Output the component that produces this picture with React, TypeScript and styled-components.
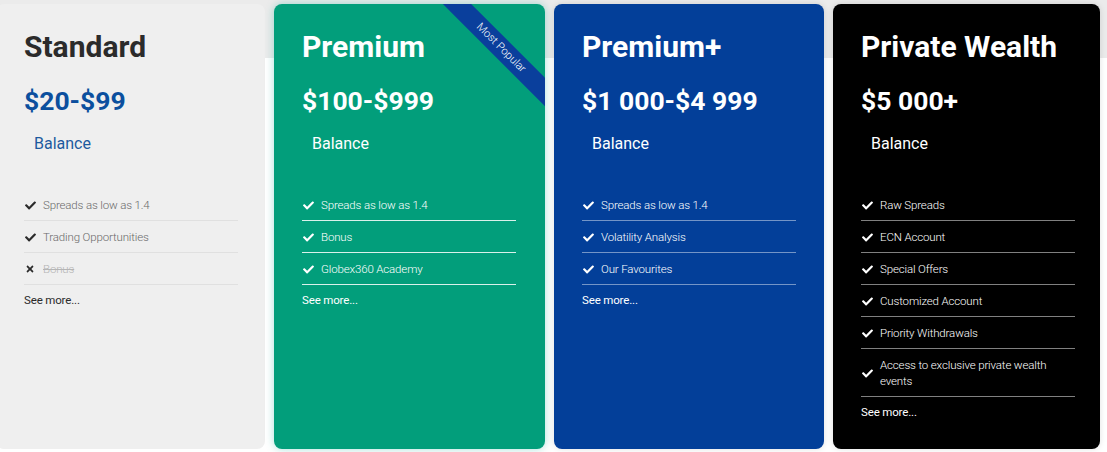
import React from "react";
import styled, { createGlobalStyle } from "styled-components";
import { FaCheck, FaTimes } from "react-icons/fa";

const GlobalStyle = createGlobalStyle`
  html, body { margin: 0; padding: 0; }
  body {
    width: 1107px;
    height: 452px;
    overflow: hidden;
    font-family: Roboto, "Liberation Sans", Arial, sans-serif;
    background: linear-gradient(#ebebeb 0, #ebebeb 58px, #ffffff 58px);
  }
`;

type Variant = "standard" | "premium" | "plus" | "private";

const theme: Record<Variant, { w: number; bg: string; title: string; price: string; balance: string; text: string; icon: string; line: string; more: string; shadow: string }> = {
  standard: { w: 269, bg: "#efefef", title: "#2b2b2b", price: "#0b4f9e", balance: "#1d5a9e", text: "#6a6a6a", icon: "#2b2b2b", line: "#e0e0e0", more: "#2b2b2b", shadow: "none" },
  premium: { w: 271, bg: "#029e7b", title: "#ffffff", price: "#ffffff", balance: "#ffffff", text: "#ffffff", icon: "#ffffff", line: "rgba(255,255,255,0.85)", more: "#ffffff", shadow: "0 0 8px rgba(0,170,150,0.35)" },
  plus: { w: 270, bg: "#033f99", title: "#ffffff", price: "#ffffff", balance: "#ffffff", text: "#ffffff", icon: "#ffffff", line: "rgba(255,255,255,0.45)", more: "#ffffff", shadow: "0 0 6px rgba(0,0,0,0.12)" },
  private: { w: 267, bg: "#000000", title: "#ffffff", price: "#ffffff", balance: "#ffffff", text: "#ffffff", icon: "#ffffff", line: "rgba(255,255,255,0.5)", more: "#ffffff", shadow: "0 0 6px rgba(0,0,0,0.12)" },
};

const Row = styled.div`
  display: flex;
  gap: 9px;
  margin-left: -4px;
  padding-top: 4px;
`;

const Card = styled.div<{ $v: Variant }>`
  position: relative;
  overflow: hidden;
  box-sizing: border-box;
  width: ${(p) => theme[p.$v].w}px;
  height: 445px;
  flex: none;
  padding: 25px 28px 0 28px;
  border-radius: 8px;
  background: ${(p) => theme[p.$v].bg};
  box-shadow: ${(p) => theme[p.$v].shadow};
`;

const Title = styled.h2<{ $v: Variant }>`
  margin: 0;
  font-size: 30px;
  line-height: 36px;
  font-weight: 700;
  color: ${(p) => theme[p.$v].title};
`;

const Price = styled.div<{ $v: Variant }>`
  margin-top: 20px;
  font-size: 26.5px;
  line-height: 32px;
  font-weight: 700;
  color: ${(p) => theme[p.$v].price};
`;

const Balance = styled.div<{ $v: Variant }>`
  margin: 17px 0 0 10px;
  font-size: 16px;
  line-height: 20px;
  font-weight: 400;
  color: ${(p) => theme[p.$v].balance};
`;

const List = styled.ul`
  list-style: none;
  margin: 35px 0 0 0;
  padding: 0;
  width: 214px;
`;

const Item = styled.li<{ $v: Variant; $off?: boolean }>`
  display: flex;
  align-items: center;
  gap: 7px;
  padding: 8px 0 7px;
  border-bottom: 1px solid ${(p) => theme[p.$v].line};
  font-size: 11.5px;
  letter-spacing: -0.15px;
  line-height: 16px;
  font-weight: 300;
  color: ${(p) => (p.$off ? "#b5b5b5" : theme[p.$v].text)};
  text-decoration: ${(p) => (p.$off ? "line-through" : "none")};
`;

const Icon = styled.span<{ $v: Variant }>`
  display: flex;
  justify-content: center;
  width: 12px;
  flex: none;
  color: ${(p) => theme[p.$v].icon};
`;

const More = styled.div<{ $v: Variant }>`
  padding-top: 7px;
  font-size: 11.5px;
  letter-spacing: -0.15px;
  line-height: 16px;
  font-weight: 400;
  color: ${(p) => theme[p.$v].more};
`;

const Ribbon = styled.div`
  position: absolute;
  left: 147px;
  top: 34px;
  width: 160px;
  height: 20px;
  transform: rotate(45deg);
  background: #0a3f9c;
  color: #ffffff;
  font-size: 11px;
  font-weight: 300;
  line-height: 20px;
  text-align: center;
`;

type Feature = { text: string; off?: boolean };
type Plan = { v: Variant; title: string; price: string; features: Feature[]; popular?: boolean };

const plans: Plan[] = [
  {
    v: "standard",
    title: "Standard",
    price: "$20-$99",
    features: [
      { text: "Spreads as low as 1.4" },
      { text: "Trading Opportunities" },
      { text: "Bonus", off: true },
    ],
  },
  {
    v: "premium",
    title: "Premium",
    price: "$100-$999",
    popular: true,
    features: [{ text: "Spreads as low as 1.4" }, { text: "Bonus" }, { text: "Globex360 Academy" }],
  },
  {
    v: "plus",
    title: "Premium+",
    price: "$1 000-$4 999",
    features: [{ text: "Spreads as low as 1.4" }, { text: "Volatility Analysis" }, { text: "Our Favourites" }],
  },
  {
    v: "private",
    title: "Private Wealth",
    price: "$5 000+",
    features: [
      { text: "Raw Spreads" },
      { text: "ECN Account" },
      { text: "Special Offers" },
      { text: "Customized Account" },
      { text: "Priority Withdrawals" },
      { text: "Access to exclusive private wealth events" },
    ],
  },
];

export default function App() {
  return (
    <>
      <GlobalStyle />
      <Row>
        {plans.map((p) => (
          <Card key={p.title} $v={p.v}>
            {p.popular && <Ribbon>Most Popular</Ribbon>}
            <Title $v={p.v}>{p.title}</Title>
            <Price $v={p.v}>{p.price}</Price>
            <Balance $v={p.v}>Balance</Balance>
            <List>
              {p.features.map((f) => (
                <Item key={f.text} $v={p.v} $off={f.off}>
                  <Icon $v={p.v}>{f.off ? <FaTimes size={10} /> : <FaCheck size={11} />}</Icon>
                  <span>{f.text}</span>
                </Item>
              ))}
            </List>
            <More $v={p.v}>See more...</More>
          </Card>
        ))}
      </Row>
    </>
  );
}
